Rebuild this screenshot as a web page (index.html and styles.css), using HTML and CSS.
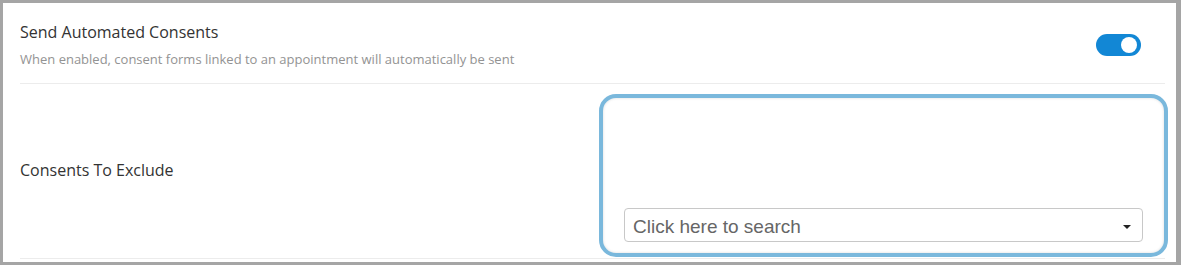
FILE: index.html
```html
<!DOCTYPE html>
<html lang="en">
<head>
    <meta charset="UTF-8">
    <title>Consent Settings</title>
    <link rel="stylesheet" href="styles.css">
</head>
<body>

<div class="panel">

    <!-- Send automated consents -->
    <div class="setting-row">
        <div class="setting-text">
            <div class="setting-title">Send Automated Consents</div>
            <div class="setting-desc">When enabled, consent forms linked to an appointment will automatically be sent</div>
        </div>
        <div class="toggle on">
            <span class="knob"></span>
        </div>
    </div>

    <!-- Consents to exclude -->
    <div class="setting-row exclude-row">
        <div class="setting-title">Consents To Exclude</div>
        <div class="picker-box">
            <div class="search-select">
                <span class="placeholder">Click here to search</span>
                <span class="caret"></span>
            </div>
        </div>
    </div>

</div>

</body>
</html>
```

FILE: styles.css
```css
body {
    margin: 0;
    padding: 0;
    background-color: #a5a5a5;
    font-family: 'Open Sans', sans-serif;
}

.panel {
    background-color: white;
    border-style: solid;
    border-color: #a5a5a5;
    border-width: 3px 5px 3px 3px;
    height: 259px;
    box-sizing: content-box;
    padding: 0 11px 0 17px;
}

.setting-row {
    display: flex;
    justify-content: space-between;
    align-items: center;
    border-bottom: 1px solid #ececec;
}

.setting-row:first-child {
    height: 80px;
}

.setting-text {
    padding-top: 2px;
}

.setting-title {
    color: #333;
    font-size: 16px;
}

.setting-desc {
    color: #939393;
    font-size: 13px;
    margin-top: 7px;
}

/* Toggle */
.toggle {
    width: 45px;
    height: 22px;
    border-radius: 11px;
    background-color: #1287d5;
    position: relative;
    margin-right: 24px;
    margin-top: 4px;
}

.knob {
    position: absolute;
    top: 3px;
    right: 4px;
    width: 16px;
    height: 16px;
    border-radius: 50%;
    background-color: white;
}

/* Exclude row */
.exclude-row {
    height: 174px;
    align-items: flex-start;
}

.exclude-row .setting-title {
    margin-top: 75px;
}

.picker-box {
    width: 519px;
    height: 144px;
    margin-top: 10px;
    border: 4px solid #7ab8dc;
    border-radius: 17px;
    box-shadow: inset 0 0 3px rgba(0, 0, 0, 0.15);
    display: flex;
    align-items: flex-end;
    padding: 0 21px 11px 21px;
    box-sizing: content-box;
    margin-right: -3px;
}

.search-select {
    flex: 1;
    height: 34px;
    box-sizing: border-box;
    border: 1px solid #c8c8c8;
    border-radius: 4px;
    display: flex;
    align-items: center;
    justify-content: space-between;
    padding: 3px 11px 0 8px;
    font-family: 'Liberation Sans', Arial, sans-serif;
}

.placeholder {
    color: #666;
    font-size: 19px;
}

.caret {
    width: 0;
    height: 0;
    border-left: 4px solid transparent;
    border-right: 4px solid transparent;
    border-top: 4px solid #222;
    margin-top: 0;
}
```
